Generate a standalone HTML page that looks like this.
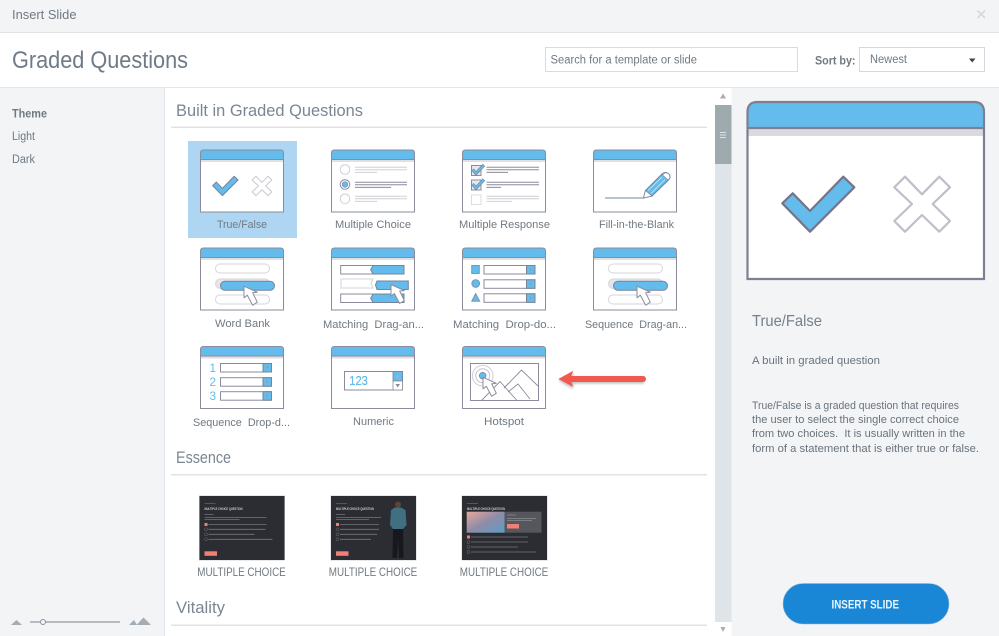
<!DOCTYPE html>
<html lang="en"><head><meta charset="utf-8"><title>Insert Slide</title>
<style>
html,body{margin:0;padding:0;background:#fff;width:999px;height:636px;overflow:hidden}
svg{display:block;filter:blur(.35px)}
text{font-family:"Liberation Sans",sans-serif;fill:#6f7982}
.l{font-size:11px;text-anchor:middle;fill:#6f7982}
.m{font-size:12px;text-anchor:middle;fill:#6f7982}
.h{font-size:17px;fill:#7b8691}
.p{font-size:11px;fill:#69737c}
.dl{stroke:#8b8b9c;stroke-width:1}
.gl{stroke:#cfcfd6;stroke-width:1}
.bl{fill:#64bcec}
</style></head><body>
<svg width="999" height="636" viewBox="0 0 999 636" xmlns="http://www.w3.org/2000/svg">
<defs>
<filter id="sh" x="-20%" y="-40%" width="140%" height="200%"><feGaussianBlur stdDeviation="1.2"/></filter>
<g id="frame">
<path d="M.5 62.5V3.5Q.5 .5 3.5 .5H80.5Q83.5 .5 83.5 3.5V62.5Z" fill="#fff"/>
<path d="M.5 10V3.5Q.5 .5 3.5 .5H80.5Q83.5 .5 83.5 3.5V10Z" fill="#64bcec"/>
<rect x="1" y="10" width="82" height="2.5" fill="#dfdfe4"/>
<path d="M.5 10H83.5M.5 62.5V3.5Q.5 .5 3.5 .5H80.5Q83.5 .5 83.5 3.5V62.5Z" fill="none" stroke="#8b8b9c" stroke-width="1"/>
</g>
<g id="cur"><path d="M0 0V11.6L3.3 9L8.7 19L13.3 16L8.7 6.6L13.3 6Z" fill="#fff" stroke="#8b8b9c" stroke-width="1" stroke-linejoin="round"/></g>
<g id="pills">
<rect x="15.5" y="16.5" width="54" height="9" rx="4.5" fill="#fff" stroke="#d6d6dc"/>
<rect x="15.5" y="31.5" width="54" height="9.5" rx="4.7" fill="#e6e6ea" stroke="#d6d6dc"/>
<rect x="15.5" y="47.5" width="54" height="9" rx="4.5" fill="#fff" stroke="#d6d6dc"/>
<rect x="20.5" y="33.8" width="54" height="9" rx="4.5" fill="#64bcec" stroke="#75849a"/>
<use href="#cur" x="44" y="38.7"/>
</g>
<g id="ddb"><rect x=".5" y=".5" width="51" height="8.5" fill="#fff" stroke="#8b8b9c"/><rect x="43" y=".5" width="8.5" height="8.5" fill="#64bcec" stroke="#75849a"/><path d="M45.5 3.5H49L47.2 6.5Z" fill="#8da0b4"/></g>
<g id="mrow"><rect x="9.7" y=".5" width="63.3" height="8.5" fill="#fff" stroke="#8b8b9c"/><path d="M39.7 4.7L42 .5H73V9H42Z" fill="#64bcec" stroke="#75849a"/></g>
<g id="thumb">
<rect x="-.5" y="-.5" width="86" height="65" fill="#cfd1d4"/>
<rect width="85" height="64" fill="#2b2d33"/>
<line x1="5" x2="16" y1="7.5" y2="7.5" stroke="#66686e" stroke-width=".7"/>
<text x="5" y="14" font-size="3.8" font-weight="bold" style="fill:#c8c9cb" textLength="38" lengthAdjust="spacingAndGlyphs">MULTIPLE CHOICE QUESTION</text>
</g>
</defs>

<!-- shell -->
<rect width="999" height="32" fill="#f3f4f6"/>
<rect y="32" width="999" height="1" fill="#dfe3e8"/>
<rect y="87" width="999" height="1" fill="#e3e6ea"/>
<rect y="88" width="164" height="548" fill="#f3f4f6"/>
<rect x="164" y="88" width="1" height="548" fill="#e3e6ea"/>
<rect x="715" y="88" width="16.500" height="548" fill="#dfe4e8"/>
<rect x="715" y="88" width="16.500" height="17" fill="#fff"/>
<rect x="715" y="105" width="16.500" height="59" fill="#9faaaf"/>
<path d="M720 132.500H726M720 135H726M720 137.500H726" stroke="#dbe0e2" stroke-width="1"/>
<path d="M723 93.500L726 98.500H720Z" fill="#a8adb2"/>
<rect x="715" y="622" width="16.500" height="14" fill="#fff"/>
<path d="M720.500 627H725.500L723 632Z" fill="#a8adb2"/>
<rect x="731.500" y="88" width="268" height="548" fill="#f3f4f6"/>

<!-- top bar -->
<text x="12" y="19" font-size="12.500" textLength="64.500" lengthAdjust="spacingAndGlyphs">Insert Slide</text>
<path d="M977.500 10.500L985 18M985 10.500L977.500 18" stroke="#d2d5d9" stroke-width="1.500"/>
<text x="12" y="68" font-size="24" textLength="176" lengthAdjust="spacingAndGlyphs" style="fill:#6f7b87">Graded Questions</text>
<rect x="545.500" y="47.500" width="252" height="24" fill="#fff" stroke="#d6dce2"/>
<text x="550.500" y="63.500" font-size="11.500" textLength="146.500" lengthAdjust="spacingAndGlyphs">Search for a template or slide</text>
<text x="815" y="64.500" font-size="12" font-weight="bold" textLength="40.500" lengthAdjust="spacingAndGlyphs">Sort by:</text>
<rect x="859.500" y="47.500" width="125" height="24" fill="#fff" stroke="#d3d9df"/>
<text x="870" y="63" font-size="11.500" textLength="37" lengthAdjust="spacingAndGlyphs">Newest</text>
<path d="M969 58.500H975.500L972.200 62.500Z" fill="#3c4248"/>

<!-- sidebar -->
<text x="12" y="117.500" font-size="11.500" font-weight="bold" textLength="35" lengthAdjust="spacingAndGlyphs">Theme</text>
<text x="12" y="140" font-size="11.500" textLength="23" lengthAdjust="spacingAndGlyphs">Light</text>
<text x="12" y="163" font-size="11.500" textLength="23" lengthAdjust="spacingAndGlyphs">Dark</text>
<path d="M11 625L16.500 620L22 625Z" fill="#a2adb5"/>
<path d="M30 622H120" stroke="#8f9aa3" stroke-width="1.200"/>
<circle cx="43" cy="622" r="2.500" fill="#f3f4f6" stroke="#87929b" stroke-width="1"/>
<path d="M129 625L134 620L137 625Z" fill="#a2adb5"/>
<path d="M136.500 625L143.500 617.500L151 625Z" fill="#a2adb5"/>

<!-- main headings -->
<text class="h" x="176" y="116" textLength="187" lengthAdjust="spacingAndGlyphs">Built in Graded Questions</text>
<rect x="171" y="126.500" width="536" height="1.500" fill="#e1e2e4"/>
<text class="h" x="176" y="463" textLength="55" lengthAdjust="spacingAndGlyphs">Essence</text>
<rect x="171" y="474" width="536" height="1.500" fill="#e1e2e4"/>
<text class="h" x="176" y="613" textLength="49" lengthAdjust="spacingAndGlyphs">Vitality</text>
<rect x="171" y="624.500" width="536" height="1.500" fill="#e1e2e4"/>

<!-- selection -->
<rect x="188" y="141" width="109" height="97" fill="#aed6f2"/>

<!-- True/False -->
<g transform="translate(200 149.500)"><use href="#frame"/>
<g transform="scale(.353) translate(-746.500 -101)">
<polygon points="782.300,203.300 792.700,193.300 810,211 843.300,176.700 854.300,187.300 810,231.700" fill="#64bcec" stroke="#75849a" stroke-width="2.800" stroke-linejoin="round"/>
<polygon points="922,194.300 939.300,176.700 950,187.300 932.700,204 950,221 939.300,231.700 922,215 905,231.700 894.300,221 912,204 894.300,187.300 905,176.700" fill="#fff" stroke="#c8c8d0" stroke-width="2.800" stroke-linejoin="round"/>
</g></g>
<text class="l" x="242" y="228" textLength="50" lengthAdjust="spacingAndGlyphs">True/False</text>

<!-- Multiple Choice -->
<g transform="translate(331 149.500)"><use href="#frame"/>
<circle cx="14" cy="20" r="4.800" fill="#fff" stroke="#cfcfd6"/>
<circle cx="14" cy="35" r="4.800" fill="#fff" stroke="#8b8b9c"/><circle cx="14" cy="35" r="2.800" class="bl" stroke="#75849a" stroke-width=".6"/>
<circle cx="14" cy="49.300" r="4.800" fill="#fff" stroke="#cfcfd6"/>
<path class="gl" d="M24 17.700H76M24 20.300H76M24 22.900H46"/>
<path class="dl" d="M24 32.700H76M24 35.300H76M24 37.900H60"/>
<path class="gl" d="M24 46.700H76M24 49.300H76M24 51.900H46"/>
</g>
<text class="l" x="373" y="228" textLength="76" lengthAdjust="spacingAndGlyphs">Multiple Choice</text>

<!-- Multiple Response -->
<g transform="translate(462 149.500)"><use href="#frame"/>
<rect x="9.500" y="16" width="9.500" height="10" fill="#e8e8ec" stroke="#8b8b9c"/>
<path d="M10.500 20L14 24L22 15.500" fill="none" stroke="#75849a" stroke-width="3.200"/><path d="M10.500 20L14 24L22 15.500" fill="none" stroke="#64bcec" stroke-width="1.800"/>
<rect x="9.500" y="30.500" width="9.500" height="10" fill="#e8e8ec" stroke="#8b8b9c"/>
<path d="M10.500 34.500L14 38.500L22 30" fill="none" stroke="#75849a" stroke-width="3.200"/><path d="M10.500 34.500L14 38.500L22 30" fill="none" stroke="#64bcec" stroke-width="1.800"/>
<rect x="9.500" y="45.500" width="9.500" height="9.500" fill="#fff" stroke="#dcdce1"/>
<path class="dl" d="M24.500 17.700H77M24.500 20.300H77M24.500 22.900H46M24.500 32.700H77M24.500 35.300H77M24.500 37.900H39"/>
<path class="gl" d="M24.500 46.700H77M24.500 49.300H77M24.500 51.900H50"/>
</g>
<text class="l" x="504.500" y="228" textLength="91" lengthAdjust="spacingAndGlyphs">Multiple Response</text>

<!-- Fill in the blank -->
<g transform="translate(593 149.500)"><use href="#frame"/>
<path d="M12 48.500H50.500" stroke="#75849a" stroke-width="1" fill="none"/>
<path d="M50.500 48.500L52.500 41L69 24.500Q72.500 21.200 75.800 24.500Q78.500 27.500 75.500 30.500L59 46.500Z" fill="#64bcec" stroke="#75849a" stroke-width="1" stroke-linejoin="round"/>
<path d="M69 24.500L75.500 30.500" stroke="#75849a" fill="none"/><path d="M70 25.500Q73.500 22 76 25.500Q77.500 28 75 30Z" fill="#fff"/>
<path d="M52.500 41L59 46.500L50.500 48.500Z" fill="#fff" stroke="#75849a" stroke-width=".8"/>
<path d="M55 41L69 27.500M58 44L72 30" stroke="#d5ecf8" stroke-width=".7" fill="none"/>
</g>
<text class="l" x="636.500" y="228" textLength="75" lengthAdjust="spacingAndGlyphs">Fill-in-the-Blank</text>

<!-- Word bank -->
<g transform="translate(200 247.500)"><use href="#frame"/><use href="#pills"/></g>
<text class="l" x="242.500" y="327" textLength="55" lengthAdjust="spacingAndGlyphs">Word Bank</text>

<!-- Matching Drag -->
<g transform="translate(331 247.500)"><use href="#frame"/>
<use href="#mrow" y="17.500"/>
<path d="M10 31.500H42L40 36L42 40.500H10Z" fill="#fff" stroke="#d6d6dc"/>
<path d="M44.500 37.500L46 33.500H77.300V42H46Z" fill="#64bcec" stroke="#75849a"/>
<use href="#mrow" y="46"/>
<use href="#cur" x="60" y="37"/>
</g>
<text class="l" x="373.500" y="328" textLength="101" lengthAdjust="spacingAndGlyphs" xml:space="preserve">Matching  Drag-an...</text>

<!-- Matching Drop -->
<g transform="translate(462 247.500)"><use href="#frame"/>
<rect x="9.700" y="18" width="7.600" height="8" class="bl" stroke="#75849a" stroke-width=".8"/>
<circle cx="13.700" cy="36" r="3.900" class="bl" stroke="#75849a" stroke-width=".8"/>
<path d="M13.700 46L17.700 53.700H9.700Z" class="bl" stroke="#75849a" stroke-width=".8"/>
<use href="#ddb" x="21.500" y="17.500"/><use href="#ddb" x="21.500" y="31.800"/><use href="#ddb" x="21.500" y="45.800"/>
</g>
<text class="l" x="504.500" y="328" textLength="103" lengthAdjust="spacingAndGlyphs" xml:space="preserve">Matching  Drop-do...</text>

<!-- Sequence Drag -->
<g transform="translate(593 247.500)"><use href="#frame"/><use href="#pills"/></g>
<text class="l" x="636" y="328" textLength="102" lengthAdjust="spacingAndGlyphs" xml:space="preserve">Sequence  Drag-an...</text>

<!-- Sequence Drop -->
<g transform="translate(200 346)"><use href="#frame"/>
<text x="12.700" y="25.800" font-size="12" text-anchor="middle" style="fill:#64bcec">1</text>
<text x="12.700" y="40" font-size="12" text-anchor="middle" style="fill:#64bcec">2</text>
<text x="12.700" y="54.200" font-size="12" text-anchor="middle" style="fill:#64bcec">3</text>
<use href="#ddb" x="20" y="17"/><use href="#ddb" x="20" y="31.200"/><use href="#ddb" x="20" y="45.200"/>
</g>
<text class="l" x="241.500" y="426" textLength="97" lengthAdjust="spacingAndGlyphs" xml:space="preserve">Sequence  Drop-d...</text>

<!-- Numeric -->
<g transform="translate(331 346)"><use href="#frame"/>
<rect x="13.500" y="25.500" width="58" height="18.500" fill="#fff" stroke="#8b8b9c"/>
<rect x="62" y="25.500" width="9.500" height="9.500" class="bl" stroke="#75849a" stroke-width=".8"/>
<rect x="62" y="35" width="9.500" height="9" fill="#fff" stroke="#8b8b9c" stroke-width=".8"/>
<path d="M64.500 32L66.700 28.500L69 32Z" fill="#9db4c6"/><path d="M64.500 38L69 38L66.700 41.500Z" fill="#8b8b9c"/>
<text x="18.300" y="39" font-size="13" textLength="18.500" lengthAdjust="spacingAndGlyphs" style="fill:#64bcec;stroke:#64bcec;stroke-width:.25">123</text>
</g>
<text class="l" x="373.500" y="425" textLength="41" lengthAdjust="spacingAndGlyphs">Numeric</text>

<!-- Hotspot -->
<g transform="translate(462 346)"><use href="#frame"/>
<rect x="8.500" y="17.500" width="68" height="37" fill="#fff" stroke="#8b8b9c"/>
<path d="M19.500 54.500L38 35.500L55 54.500M42 42L59.500 24L76 40M46 46L56 38L68 53" fill="none" stroke="#8b8b9c" stroke-width=".9"/>
<circle cx="20.700" cy="29.700" r="10.300" fill="#fff" stroke="#d0d0d6"/><circle cx="20.700" cy="29.700" r="7" fill="#fff" stroke="#c4c4cc"/>
<circle cx="20.700" cy="29.700" r="3.300" class="bl" stroke="#75849a" stroke-width=".8"/>
<use href="#cur" x="21" y="31.300"/>
</g>
<text class="l" x="504" y="425" textLength="40" lengthAdjust="spacingAndGlyphs">Hotspot</text>

<!-- Arrow -->
<path d="M558.500 380.500L573 372.500V377H644V383.500H573V389Z" fill="#777" opacity=".5" filter="url(#sh)"/>
<path d="M571 379H643" stroke="#f2584c" stroke-width="6" stroke-linecap="round"/>
<path d="M558.300 379L573.300 370.700L570 379L573.300 386.700Z" fill="#f2584c"/>

<!-- Essence thumbs -->
<g transform="translate(199.500 496)"><use href="#thumb"/>
<g stroke="#74767c" stroke-width=".8"><path d="M5 18.500H14M5 21.500H67M5 23.500H40"/><path d="M9 28.500H67M9 33.300H66M9 38.300H55M9 43.300H73"/></g>
<rect x="5" y="27" width="3" height="3" fill="#f27f76"/><g fill="none" stroke="#707278" stroke-width=".5"><circle cx="6.500" cy="33.300" r="1.500"/><circle cx="6.500" cy="38.300" r="1.500"/><circle cx="6.500" cy="43.300" r="1.500"/></g>
<rect x="5" y="55.300" width="12.500" height="4.500" fill="#f27f76"/></g>

<g transform="translate(331 496)"><use href="#thumb"/>
<g stroke="#74767c" stroke-width=".8"><path d="M5 18.500H14M5 21.500H50M5 23.500H38"/><path d="M9 28.500H48M9 33.300H48M9 38.300H46M9 43.300H40"/></g>
<rect x="5" y="27" width="3" height="3" fill="#f27f76"/><g fill="none" stroke="#707278" stroke-width=".5"><circle cx="6.500" cy="33.300" r="1.500"/><circle cx="6.500" cy="38.300" r="1.500"/><circle cx="6.500" cy="43.300" r="1.500"/></g>
<rect x="5" y="55.300" width="12.500" height="4.500" fill="#f27f76"/>
<circle cx="67" cy="8.500" r="3" fill="#5b4438"/>
<path d="M60 14L64 11.500H70L74.500 14L75.500 29L72 33H62L59 29Z" fill="#3f6f80"/>
<path d="M62 33H72L72.500 62H68L67 42L66 62H61.500Z" fill="#16181d"/></g>

<g transform="translate(462 496)"><use href="#thumb"/>
<defs><linearGradient id="ph" x1="0" y1="0" x2="1" y2="1"><stop offset="0" stop-color="#e8a79b"/><stop offset=".5" stop-color="#8f8ca8"/><stop offset="1" stop-color="#5e9cc4"/></linearGradient></defs>
<rect x="4.700" y="15.700" width="37.800" height="21" fill="url(#ph)"/>
<rect x="42.500" y="15.700" width="37" height="21" fill="#55575c"/>
<rect x="45" y="28" width="12" height="4.500" fill="#f27f76"/>
<path d="M45 19H54M45 22.500H74M45 24.500H70" stroke="#8a8c90" stroke-width=".8"/>
<g stroke="#74767c" stroke-width=".8"><path d="M9 41H66M9 46H66M9 51H56M9 56H74"/></g>
<rect x="5" y="39.500" width="3" height="3" fill="#f27f76"/><g fill="none" stroke="#707278" stroke-width=".5"><circle cx="6.500" cy="46" r="1.500"/><circle cx="6.500" cy="51" r="1.500"/><circle cx="6.500" cy="56" r="1.500"/></g></g>

<text class="m" x="241.500" y="576" textLength="88.500" lengthAdjust="spacingAndGlyphs">MULTIPLE CHOICE</text>
<text class="m" x="373" y="576" textLength="88.500" lengthAdjust="spacingAndGlyphs">MULTIPLE CHOICE</text>
<text class="m" x="504" y="576" textLength="88.500" lengthAdjust="spacingAndGlyphs">MULTIPLE CHOICE</text>

<!-- Preview -->
<path d="M747.500 279V112Q747.500 102 757.500 102H974Q984 102 984 112V279Z" fill="#fff"/>
<path d="M747.500 128V112Q747.500 102 757.500 102H974Q984 102 984 112V128Z" fill="#64bcec"/>
<rect x="748" y="128" width="236" height="8" fill="#d9d9de"/>
<path d="M747.500 128H984M747.500 279V112Q747.500 102 757.500 102H974Q984 102 984 112V279Z" fill="none" stroke="#7f7f94" stroke-width="2.200"/>
<polygon points="782.300,203.300 792.700,193.300 810,211 843.300,176.700 854.300,187.300 810,231.700" fill="#64bcec" stroke="#75758a" stroke-width="2.200" stroke-linejoin="round"/>
<polygon points="922,194.300 939.300,176.700 950,187.300 932.700,204 950,221 939.300,231.700 922,215 905,231.700 894.300,221 912,204 894.300,187.300 905,176.700" fill="#fff" stroke="#bfbfc9" stroke-width="2.200" stroke-linejoin="round"/>

<text x="752" y="326" font-size="16" textLength="70" lengthAdjust="spacingAndGlyphs" style="fill:#75808a">True/False</text>
<text class="p" x="752" y="364" textLength="128" lengthAdjust="spacingAndGlyphs">A built in graded question</text>
<text class="p" x="752" y="409" textLength="207" lengthAdjust="spacingAndGlyphs">True/False is a graded question that requires</text>
<text class="p" x="752" y="423" textLength="207" lengthAdjust="spacingAndGlyphs">the user to select the single correct choice</text>
<text class="p" x="752" y="437" textLength="213" lengthAdjust="spacingAndGlyphs" xml:space="preserve">from two choices.  It is usually written in the</text>
<text class="p" x="752" y="452" textLength="227" lengthAdjust="spacingAndGlyphs">form of a statement that is either true or false.</text>

<rect x="783" y="583.500" width="166" height="40.500" rx="20.200" fill="#1a86d6" stroke="#8fb6d6" stroke-width=".6"/>
<text x="831.500" y="608.500" font-size="11.500" font-weight="bold" textLength="67.500" lengthAdjust="spacingAndGlyphs" style="fill:#e8f4fc">INSERT SLIDE</text>
</svg>
</body></html>
